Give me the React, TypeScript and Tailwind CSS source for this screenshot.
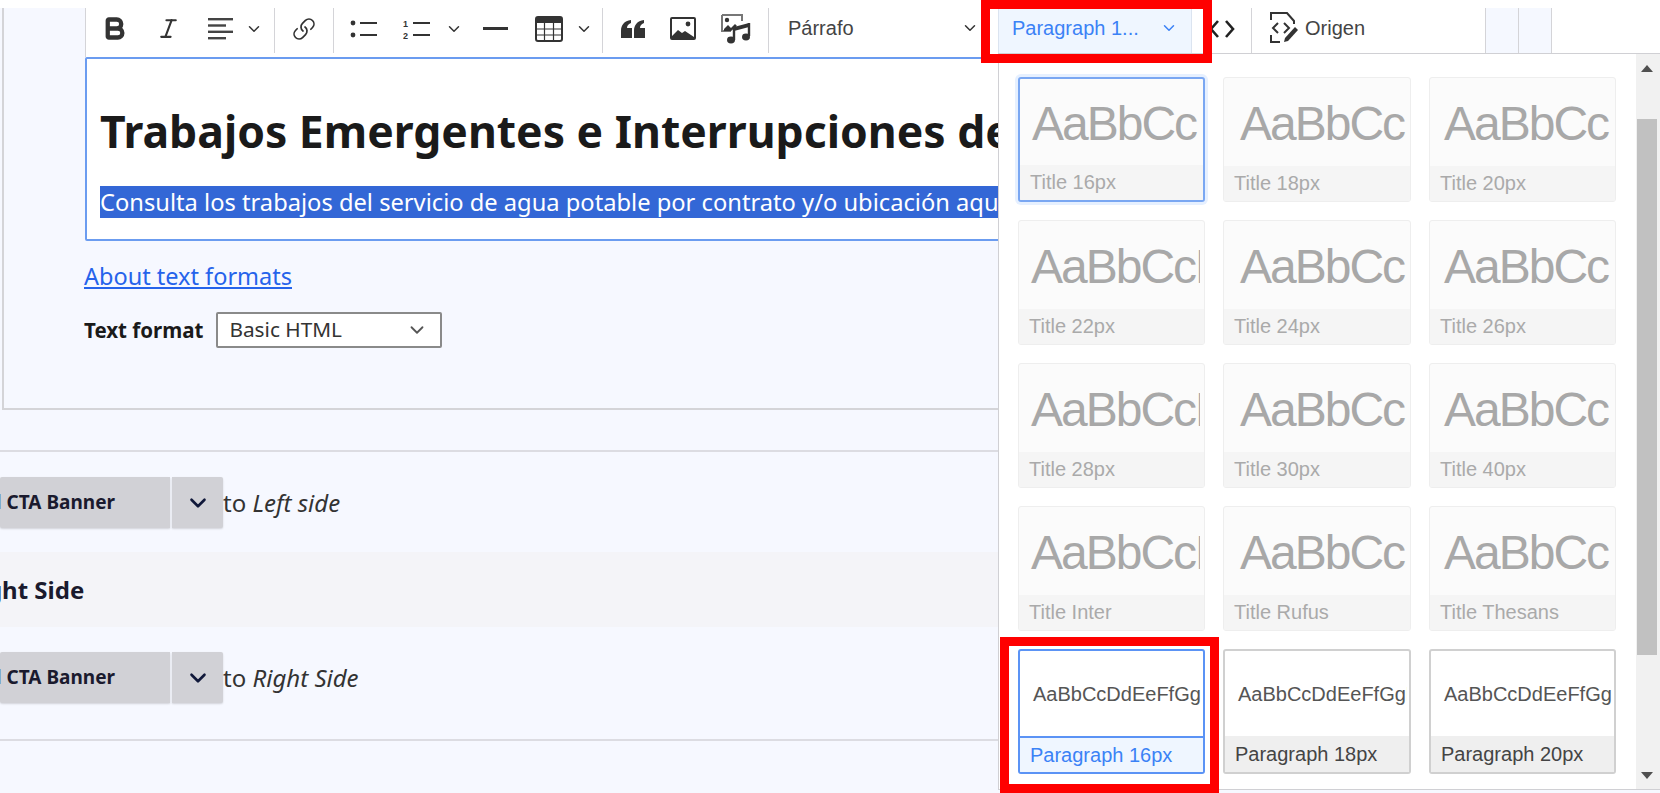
import { Bold, ChevronDown, Italic, Link } from 'lucide-react'

const sans = "font-['Noto_Sans','Open_Sans',sans-serif]"
const arial = "font-['Liberation_Sans',Arial,sans-serif]"

const titles = ['16px', '18px', '20px', '22px', '24px', '26px', '28px', '30px', '40px', 'Inter', 'Rufus', 'Thesans']

const Divider = () => <div className="h-[45px] w-px shrink-0 self-start bg-[#d4d4d8]" />

const Chevron = ({ className = '' }: { className?: string }) => (
    <ChevronDown size={18} strokeWidth={2} className={`shrink-0 text-[#333] ${className}`} />
)

const AlignIcon = () => (
    <svg width="26" height="22" viewBox="0 0 26 22" className="shrink-0 text-[#444]">
        <rect x="0" y="0" width="25" height="2.4" fill="currentColor" />
        <rect x="0" y="6.3" width="18" height="2.4" fill="currentColor" />
        <rect x="0" y="12.6" width="25" height="2.4" fill="currentColor" />
        <rect x="0" y="19" width="18" height="2.4" fill="currentColor" />
    </svg>
)

const BulletIcon = () => (
    <svg width="28" height="18" viewBox="0 0 28 18" className="shrink-0 text-[#333]">
        <circle cx="3" cy="3" r="2.4" fill="currentColor" />
        <circle cx="3" cy="15" r="2.4" fill="currentColor" />
        <rect x="10" y="2" width="17" height="2" fill="currentColor" />
        <rect x="10" y="14" width="17" height="2" fill="currentColor" />
    </svg>
)

const NumberIcon = () => (
    <svg width="28" height="20" viewBox="0 0 28 20" className="shrink-0 text-[#333]">
        <text x="0" y="8" fontSize="9" fontWeight="700" fontFamily="Liberation Sans" fill="currentColor">1</text>
        <text x="0" y="20" fontSize="9" fontWeight="700" fontFamily="Liberation Sans" fill="currentColor">2</text>
        <rect x="10" y="3" width="17" height="2" fill="currentColor" />
        <rect x="10" y="15" width="17" height="2" fill="currentColor" />
    </svg>
)

const TableIcon = () => (
    <svg width="28" height="26" viewBox="0 0 28 26" className="shrink-0 text-[#333]">
        <rect x="1" y="1" width="26" height="24" rx="2" fill="none" stroke="currentColor" strokeWidth="2" />
        <rect x="1" y="1" width="26" height="6" fill="currentColor" />
        <path d="M1 13h26M1 19h26M9.5 7v18M18.5 7v18" stroke="currentColor" strokeWidth="1.2" />
    </svg>
)

const QuoteIcon = () => (
    <svg width="24" height="18" viewBox="0 0 24 18" className="shrink-0 text-[#333]">
        <path
            d="M0 11C0 5 3 1 10 0v3C7 4 6 6 6 8h5v10H0zM13 11c0-6 3-10 10-11v3c-3 1-4 3-4 5h5v10H13z"
            fill="currentColor"
        />
    </svg>
)

const ImageIcon = () => (
    <svg width="26" height="23" viewBox="0 0 26 23" className="shrink-0 text-[#333]">
        <rect x="1" y="1" width="24" height="21" rx="1" fill="none" stroke="currentColor" strokeWidth="2" />
        <circle cx="18" cy="7" r="2.4" fill="currentColor" />
        <path d="M2 19l6-6 4 3 3-2 9 6v1H2z" fill="currentColor" />
    </svg>
)

const MediaIcon = () => (
    <svg width="30" height="30" viewBox="0 0 30 30" className="shrink-0 text-[#333]">
        <path d="M1 1h20v6M1 1v16h9" fill="none" stroke="#777" strokeWidth="2" />
        <circle cx="6" cy="6" r="2.2" fill="currentColor" />
        <path d="M3 15l4-4 3 3 4-4 2 2-6 5H3z" fill="currentColor" />
        <path d="M13 13l15-4v4l-15 4z" fill="currentColor" />
        <path d="M13 13v13M28 9v13" stroke="currentColor" strokeWidth="2.4" />
        <ellipse cx="10" cy="26" rx="4" ry="3.4" fill="currentColor" />
        <ellipse cx="25" cy="23" rx="4" ry="3.4" fill="currentColor" />
    </svg>
)

const SourceIcon = () => (
    <svg width="29" height="31" viewBox="0 0 29 31" className="shrink-0 text-[#333]">
        <path d="M6 1h12l7 8v3M2 8V1h4M2 23v7h9" fill="none" stroke="currentColor" strokeWidth="2" />
        <path d="M9 11l-5 5 5 5M15 11l5 5-5 5" fill="none" stroke="currentColor" strokeWidth="2" />
        <path d="M15 30l1-4 10-11 3 3-10 11z" fill="currentColor" />
    </svg>
)

const Toolbar = () => (
    <div className="flex h-[49px] w-full items-start border-l border-[#d4d4d8] bg-white">
        <div className="flex h-[41px] w-[55px] items-center justify-center pl-[1px]">
            <Bold size={27} strokeWidth={3.8} className="text-[#333]" />
        </div>
        <div className="flex h-[41px] w-[54px] items-center justify-center">
            <Italic size={25} strokeWidth={2} className="text-[#333]" />
        </div>
        <div className="flex h-[41px] w-[79px] items-center pl-[13px] gap-[11px]">
            <AlignIcon />
            <Chevron />
        </div>
        <Divider />
        <div className="flex h-[41px] w-[58px] items-center justify-center">
            <Link size={24} strokeWidth={1.7} className="-scale-x-100 rotate-90 text-[#333]" />
        </div>
        <Divider />
        <div className="flex h-[41px] items-center pl-[16px]">
            <BulletIcon />
            <div className="ml-[25px]">
                <NumberIcon />
            </div>
            <Chevron className="ml-[14px]" />
            <div className="ml-[20px] h-[2.5px] w-[25px] bg-[#333]" />
            <div className="ml-[27px]">
                <TableIcon />
            </div>
            <Chevron className="ml-[12px]" />
        </div>
        <div className="ml-[9px]">
            <Divider />
        </div>
        <div className="flex h-[41px] items-center pl-[18px]">
            <QuoteIcon />
            <div className="ml-[25px]">
                <ImageIcon />
            </div>
            <div className="ml-[25px]">
                <MediaIcon />
            </div>
        </div>
        <div className="ml-[17px]">
            <Divider />
        </div>
        <div className={`flex h-[39px] w-[229px] items-center pl-[19px] pr-[19px] justify-between text-[20px] text-[#444] ${arial}`}>
            <span>Párrafo</span>
            <Chevron />
        </div>
        <div className={`flex h-[45px] w-[194px] items-center border-x border-[#dbe4f0] bg-[#eff6ff] pb-[6px] pl-[13px] text-[20px] text-[#3b82f6] ${arial}`}>
            <span>Paragraph 1...</span>
            <ChevronDown size={18} strokeWidth={2} className="ml-[21px] shrink-0" />
        </div>
        <div className="flex h-[41px] w-[59px] items-center justify-end pr-[16px]">
            <svg width="26" height="18" viewBox="0 0 26 18" className="text-[#222]">
                <path d="M9 1L2 9l7 8M17 1l7 8-7 8" fill="none" stroke="currentColor" strokeWidth="2.6" />
            </svg>
        </div>
        <Divider />
        <div className={`flex h-[39px] w-[233px] items-center pl-[17px] text-[20px] text-[#444] ${arial}`}>
            <SourceIcon />
            <span className="ml-[7px]">Origen</span>
        </div>
        <div className="h-[45px] w-[34px] border-x border-[#d4d4d8] bg-[#f5f8ff]" />
        <div className="h-[45px] w-[33px] border-r border-[#d4d4d8] bg-[#f5f8ff]" />
    </div>
)

const Editor = () => (
    <div className={`h-[184px] w-[1000px] rounded-[2px] border-2 border-[#6b9cf0] bg-white pl-[13px] pt-[42px] overflow-hidden ${sans}`}>
        <h2 className="whitespace-nowrap text-[44.5px] leading-[60px] font-bold text-[#1a1a1a]">
            Trabajos Emergentes e Interrupciones del Servicio
        </h2>
        <p className="mt-[24px] whitespace-nowrap text-[23.7px] leading-[34px]">
            <span className="bg-[#3367d6] text-white">
                Consulta los trabajos del servicio de agua potable por contrato y/o ubicación aquí y también los avisos
            </span>
        </p>
    </div>
)

const CtaRow = ({ side }: { side: string }) => (
    <div className={`flex items-center ${sans}`}>
        <div className="flex h-[51px] w-[170px] items-center justify-end overflow-hidden whitespace-nowrap rounded-l-[2px] bg-[#d1d1d6] pr-[55px] text-[19px] font-bold text-[#1a1a2e] shadow-[0_1px_2px_rgba(0,0,0,0.15)]">
            <span className="shrink-0">Add CTA Banner</span>
        </div>
        <div className="ml-[2px] flex h-[51px] w-[51px] items-center justify-center rounded-r-[2px] bg-[#d1d1d6] shadow-[0_1px_2px_rgba(0,0,0,0.15)]">
            <ChevronDown size={26} strokeWidth={2.4} className="text-[#10183a]" />
        </div>
        <span className="text-[24px] text-[#333]">
            to <em>{side}</em>
        </span>
    </div>
)

const StyleCard = ({ label, column, active }: { label: string; column: number; active?: boolean }) => {
    const pad = ['pl-[12px]', 'pl-[16px]', 'pl-[14px]'][column]
    return (
        <div
            className={`flex h-[125px] flex-col overflow-hidden rounded-[3px] bg-[#fbfbfb] ${
                active ? 'border-2 border-[#7aa7f2] shadow-[0_0_0_3px_#e6f0ff]' : 'border border-[#eeeeee]'
            }`}
        >
            <div className={`mr-[4px] flex flex-1 items-center overflow-hidden pt-[4px] ${pad}`}>
                <span className="whitespace-nowrap text-[48px] tracking-[-2px] text-[#a8a8a8]">AaBbCcDdEeFfGg</span>
            </div>
            <div className="flex h-[35px] items-center bg-[#f5f5f5] pb-[2px] pl-[10px] text-[20px] text-[#aaaaaa]">{label}</div>
        </div>
    )
}

const ParagraphCard = ({ label, active }: { label: string; active?: boolean }) => (
    <div className={`flex h-[125px] flex-col overflow-hidden rounded-[3px] border-2 ${active ? 'border-[#5b93f5]' : 'border-[#d0d0d0]'} bg-white`}>
        <div className="mr-[2px] flex flex-1 items-center overflow-hidden pl-[13px]">
            <span className="whitespace-nowrap text-[20px] text-[#555555]">AaBbCcDdEeFfGgHhIiJj</span>
        </div>
        <div
            className={`flex h-[36px] items-center pl-[10px] text-[20px] ${
                active ? 'border-t-2 border-[#5b93f5] bg-[#eff6ff] text-[#3b82f6]' : 'bg-[#efefef] text-[#444444]'
            }`}
        >
            {label}
        </div>
    </div>
)

const StylesPanel = () => (
    <div className={`absolute left-[998px] right-0 top-[53px] bottom-[3px] flex border-l border-t border-b border-[#d0d0d4] bg-white ${arial}`}>
        <div className="flex-1 pl-[19px] pr-[19px] pt-[23px]">
            <div className="grid grid-cols-[187px_188px_187px] gap-x-[18px] gap-y-[18px]">
                {titles.map((t, i) => (
                    <StyleCard key={t} label={`Title ${t}`} column={i % 3} active={i === 0} />
                ))}
                <ParagraphCard label="Paragraph 16px" active />
                <ParagraphCard label="Paragraph 18px" />
                <ParagraphCard label="Paragraph 20px" />
            </div>
        </div>
        <div className="flex w-[24px] shrink-0 flex-col items-center bg-[#f1f1f1] pr-[2px]">
            <div className="mt-[11px] h-0 w-0 border-x-[6px] border-b-[7px] border-x-transparent border-b-[#505050]" />
            <div className="mt-[47px] h-[536px] w-[20px] bg-[#c1c1c1]" />
            <div className="mt-[117px] h-0 w-0 border-x-[6px] border-t-[7px] border-x-transparent border-t-[#505050]" />
        </div>
    </div>
)

export default function App() {
    return (
        <div className={`relative h-[793px] w-full overflow-hidden bg-[#f6f8ff] ${sans}`}>
            <div className="h-2 w-full bg-white" />
            <div className="ml-[2px] h-[402px] border-b-2 border-l-2 border-[#d4d4d8] pl-[81px]">
                <Toolbar />
                <Editor />
                <a href="#" className="-ml-px mt-[19px] block text-[23.5px] leading-[32px] text-[#2563eb] underline">
                    About text formats
                </a>
                <div className="-ml-px mt-[20px] flex items-center">
                    <span className="text-[20.5px] font-bold text-[#1a1a1a]">Text format</span>
                    <div className="ml-[13px] flex h-[36px] w-[226px] items-center justify-between rounded-[2px] border-2 border-[#8a8a8a] bg-white pl-[11px] pr-[12px] text-[20.8px] text-[#333]">
                        <span>Basic HTML</span>
                        <ChevronDown size={22} strokeWidth={2} className="text-[#555]" />
                    </div>
                </div>
            </div>
            <div className="mt-[40px] border-t-2 border-[#dcdce2]" />
            <div className="pt-[25px]">
                <CtaRow side="Left side" />
            </div>
            <div className="mt-[24px] flex h-[75px] items-center bg-[#f4f4f8]">
                <span className="-ml-[36px] shrink-0 text-[24px] font-bold text-[#1a1a2e]">Right Side</span>
            </div>
            <div className="pt-[25px]">
                <CtaRow side="Right Side" />
            </div>
            <div className="mt-[36px] border-t-2 border-[#dcdce2]" />

            <StylesPanel />

            {/* red annotation boxes */}
            <div className="absolute left-[981px] top-0 h-[63px] w-[231px] border-[9px] border-[#ff0000]" />
            <div className="absolute left-[1000px] top-[637px] h-[156px] w-[219px] border-[9px] border-[#ff0000]" />
        </div>
    )
}
